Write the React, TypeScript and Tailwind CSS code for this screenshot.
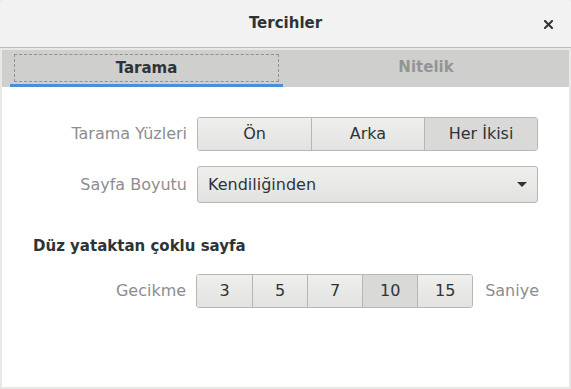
import React from "react";

const font = { fontFamily: '"DejaVu Sans", "Noto Sans", sans-serif' };

function Seg({ items, selected, widths }: { items: string[]; selected: number; widths: string }) {
  return (
    <div className="flex rounded-[3px] border border-[#b6b6b3] overflow-hidden">
      {items.map((t, i) => (
        <div
          key={t}
          className={
            `${widths} flex items-center justify-center text-[16px] text-[#2e3436] ` +
            (i > 0 ? "border-l border-[#b6b6b3] " : "") +
            (i === selected ? "bg-[#d9d9d7]" : "bg-gradient-to-b from-[#efefee] to-[#e2e2e0]")
          }
        >
          {t}
        </div>
      ))}
    </div>
  );
}

export default function App() {
  return (
    <div className="w-[571px] h-[389px] bg-[#e8e8e7] flex flex-col overflow-hidden" style={font}>
      <div className="h-[48px] shrink-0 bg-[#f2f2f2] border-b border-[#bdbdbb] rounded-t-[4px] relative flex items-center justify-center">
        <span className="text-[15px] font-bold text-[#2e3436]">Tercihler</span>
        <svg className="absolute left-[544px] top-[20px]" width="9" height="9" viewBox="0 0 9 9">
          <path d="M1 1 L8 8 M8 1 L1 8" stroke="#2e3436" strokeWidth="2" strokeLinecap="square" />
        </svg>
      </div>
      <div className="flex-1 flex flex-col mx-[2px] mt-[2px] mb-[2px] min-h-0">
        <div className="h-[37px] shrink-0 bg-[#cfcfcd] pl-[8px] flex">
          <div className="w-[273px] border-b-[3px] border-[#4a90d9] pt-[4px] pb-[2px] px-[4px]">
            <div className="h-full border border-dashed border-[#8f8f8d] flex items-center justify-center">
              <span className="text-[15px] font-bold text-[#2e3436]">Tarama</span>
            </div>
          </div>
          <div className="flex-1 flex items-center justify-center pb-[2px]">
            <span className="text-[15px] font-bold text-[#929595]">Nitelik</span>
          </div>
        </div>
        <div className="flex-1 bg-white pl-[31px] pr-[30px] pt-[30px]">
          <div className="flex items-center">
            <div className="w-[154px] text-right text-[16px] text-[#8b8e8f]">Tarama Yüzleri</div>
            <div className="ml-[10px]">
              <Seg items={["Ön", "Arka", "Her İkisi"]} selected={2} widths="w-[113px] h-[32px]" />
            </div>
          </div>
          <div className="flex items-center mt-[15px]">
            <div className="w-[154px] text-right text-[16px] text-[#8b8e8f]">Sayfa Boyutu</div>
            <div className="ml-[10px] w-[341px] h-[37px] rounded-[3px] border border-[#b6b6b3] bg-gradient-to-b from-[#efefee] to-[#e2e2e0] flex items-center pl-[10px] pr-[10px]">
              <span className="flex-1 text-[16px] text-[#2e3436]">Kendiliğinden</span>
              <svg width="10" height="5" viewBox="0 0 10 5">
                <path d="M0 0 L10 0 L5 5 Z" fill="#2e3436" />
              </svg>
            </div>
          </div>
          <div className="mt-[33px] text-[15px] font-bold text-[#2e3436] leading-[20px]">Düz yataktan çoklu sayfa</div>
          <div className="flex items-center mt-[18px]">
            <div className="w-[154px] text-right text-[16px] text-[#8b8e8f]">Gecikme</div>
            <div className="ml-[10px]">
              <Seg items={["3", "5", "7", "10", "15"]} selected={3} widths="w-[55px] h-[32px]" />
            </div>
            <div className="ml-[12px] text-[16px] text-[#8b8e8f]">Saniye</div>
          </div>
        </div>
      </div>
    </div>
  );
}
